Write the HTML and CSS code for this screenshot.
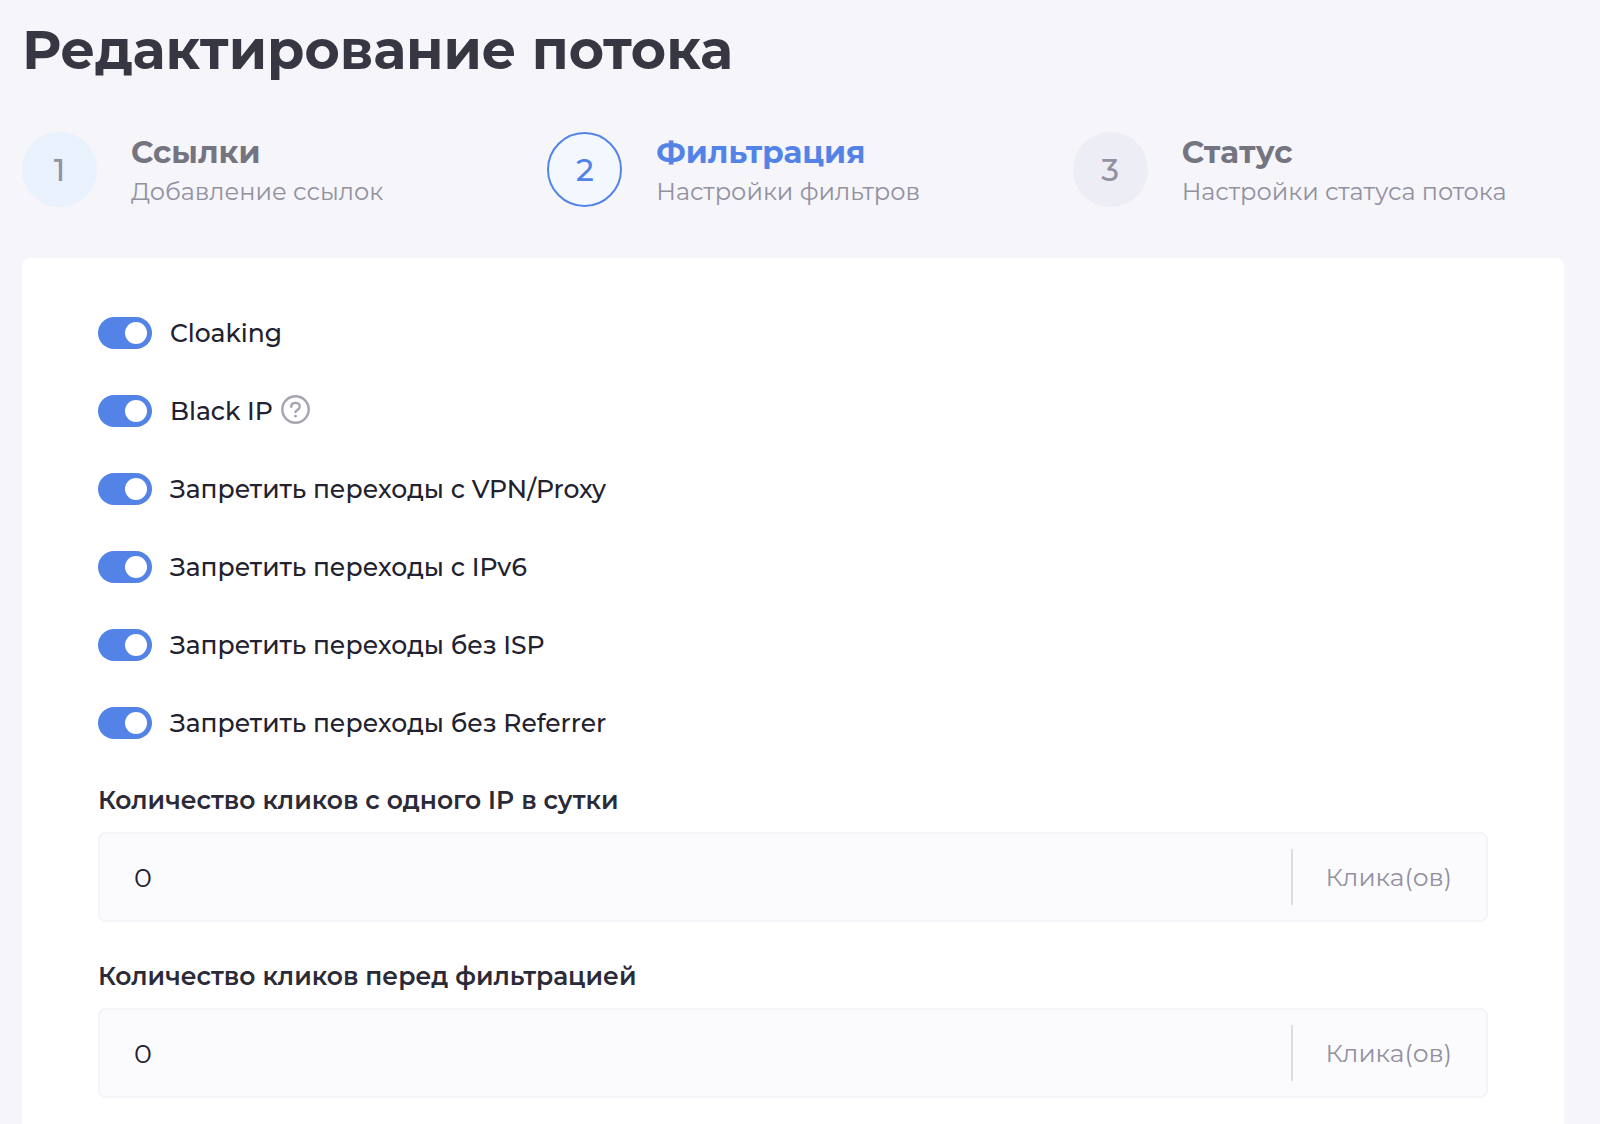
FILE: index.html
```html
<!DOCTYPE html>
<html lang="ru">
<head>
<meta charset="utf-8">
<meta name="viewport" content="width=device-width, initial-scale=1">
<title>Редактирование потока</title>
<link rel="stylesheet" href="styles.css">
</head>
<body>
<main class="page">
  <h1 class="page-title">Редактирование потока</h1>

  <ol class="steps">
    <li class="step step-done">
      <span class="step-number">1</span>
      <div class="step-text">
        <h2 class="step-title">Ссылки</h2>
        <p class="step-note">Добавление ссылок</p>
      </div>
    </li>
    <li class="step step-active" aria-current="step">
      <span class="step-number">2</span>
      <div class="step-text">
        <h2 class="step-title">Фильтрация</h2>
        <p class="step-note">Настройки фильтров</p>
      </div>
    </li>
    <li class="step">
      <span class="step-number">3</span>
      <div class="step-text">
        <h2 class="step-title">Статус</h2>
        <p class="step-note">Настройки статуса потока</p>
      </div>
    </li>
  </ol>

  <form class="card">
    <div class="switches">
      <div class="switch-row">
        <input class="switch" type="checkbox" id="cloaking" checked>
        <label for="cloaking">Cloaking</label>
      </div>
      <div class="switch-row">
        <input class="switch" type="checkbox" id="black-ip" checked>
        <label for="black-ip">Black IP</label>
        <button class="help" type="button" aria-label="Справка">
          <svg viewBox="0 0 29 29" width="29" height="29" fill="none" stroke="currentColor" stroke-width="2.4" stroke-linecap="round" stroke-linejoin="round">
            <circle cx="14.5" cy="14.5" r="13.2"/>
            <path d="M10.2 11.8C10.2 9.400 12 7.900 14.500 7.900c2.500 0 4.300 1.600 4.300 3.800 0 2.900-4.300 3.300-4.300 5.300"/>
            <circle cx="14.5" cy="21.2" r="1.400" fill="currentColor" stroke="none"/>
          </svg>
        </button>
      </div>
      <div class="switch-row">
        <input class="switch" type="checkbox" id="no-vpn" checked>
        <label for="no-vpn">Запретить переходы с VPN/Proxy</label>
      </div>
      <div class="switch-row">
        <input class="switch" type="checkbox" id="no-ipv6" checked>
        <label for="no-ipv6">Запретить переходы с IPv6</label>
      </div>
      <div class="switch-row">
        <input class="switch" type="checkbox" id="no-isp" checked>
        <label for="no-isp">Запретить переходы без ISP</label>
      </div>
      <div class="switch-row">
        <input class="switch" type="checkbox" id="no-referrer" checked>
        <label for="no-referrer">Запретить переходы без Referrer</label>
      </div>
    </div>

    <div class="fields">
      <div class="field">
        <label class="field-label" for="clicks-per-ip">Количество кликов с одного IP в сутки</label>
        <div class="field-box">
          <input class="field-input" type="text" inputmode="numeric" id="clicks-per-ip" value="0">
          <span class="field-unit">Клика(ов)</span>
        </div>
      </div>
      <div class="field">
        <label class="field-label" for="clicks-before">Количество кликов перед фильтрацией</label>
        <div class="field-box">
          <input class="field-input" type="text" inputmode="numeric" id="clicks-before" value="0">
          <span class="field-unit">Клика(ов)</span>
        </div>
      </div>
    </div>
  </form>
</main>
</body>
</html>
```

FILE: styles.css
```css
* {
  box-sizing: border-box;
}

body {
  margin: 0;
  background: #f5f5fa;
  color: #22212f;
  font-family: Montserrat, Inter, "Noto Sans", sans-serif;
  font-size: 25px;
  line-height: 32px;
}

.page {
  display: flex;
  flex-direction: column;
  min-height: 100vh;
  padding: 18px 36px 0 22px;
}

.page-title {
  margin: 0 0 50px;
  color: #373643;
  font-size: 54px;
  font-weight: 700;
  line-height: 64px;
}

.steps {
  display: grid;
  grid-template-columns: repeat(3, 1fr);
  gap: 34px;
  margin: 0 0 46px;
  padding: 0;
  list-style: none;
}

.step {
  display: flex;
  align-items: flex-start;
  gap: 34px;
  color: #92919f;
}

.step-number {
  display: grid;
  place-items: center;
  flex: none;
  width: 75px;
  height: 75px;
  border-radius: 50%;
  background: #ecedf5;
  font-size: 31px;
  font-weight: 500;
}

.step-title {
  margin: 0;
  color: #757481;
  font-size: 31px;
  font-weight: 700;
  line-height: 40px;
}

.step-note {
  margin: 0;
  font-size: 24px;
  line-height: 40px;
}

.step-done .step-number {
  background: #e9f1fd;
}

.step-active .step-number {
  border: 2px solid #5483e8;
  background: #f3f8ff;
  color: #5483e8;
}

.step-active .step-title {
  color: #5483e8;
}

.card {
  flex: 1;
  padding: 59px 76px 24px;
  border-radius: 8px 8px 0 0;
  background: #fff;
}

.switches {
  display: flex;
  flex-direction: column;
  gap: 46px;
}

.switch-row {
  display: flex;
  align-items: center;
  font-weight: 500;
}

.switch {
  display: flex;
  align-items: center;
  justify-content: flex-end;
  flex: none;
  width: 54px;
  height: 32px;
  margin: 0 18px 0 0;
  padding: 5px;
  border-radius: 16px;
  background: #d5d5e0;
  appearance: none;
  cursor: pointer;
}

.switch::before {
  width: 22px;
  height: 22px;
  border-radius: 50%;
  background: #fff;
  content: "";
}

.switch:checked {
  background: #5483e8;
}

.switch:not(:checked) {
  justify-content: flex-start;
}

.help {
  display: flex;
  margin: 0 0 3px 8px;
  padding: 0;
  border: 0;
  background: none;
  color: #a5a4b2;
  cursor: pointer;
}

.fields {
  display: flex;
  flex-direction: column;
  gap: 38px;
  margin-top: 45px;
}

.field {
  display: flex;
  flex-direction: column;
  gap: 16px;
}

.field-label {
  color: #2b2a38;
  font-weight: 600;
}

.field-box {
  display: flex;
  align-items: center;
  height: 90px;
  border: 2px solid #f4f4f9;
  border-radius: 8px;
  background: #fbfbfd;
}

.field-input {
  flex: 1;
  min-width: 0;
  height: 100%;
  padding: 0 34px;
  border: 0;
  background: none;
  color: #22212f;
  font: inherit;
  font-size: 27px;
}

.field-unit {
  padding: 12px 34px 12px 32px;
  border-left: 2px solid #dcdce6;
  color: #92919f;
}
```
